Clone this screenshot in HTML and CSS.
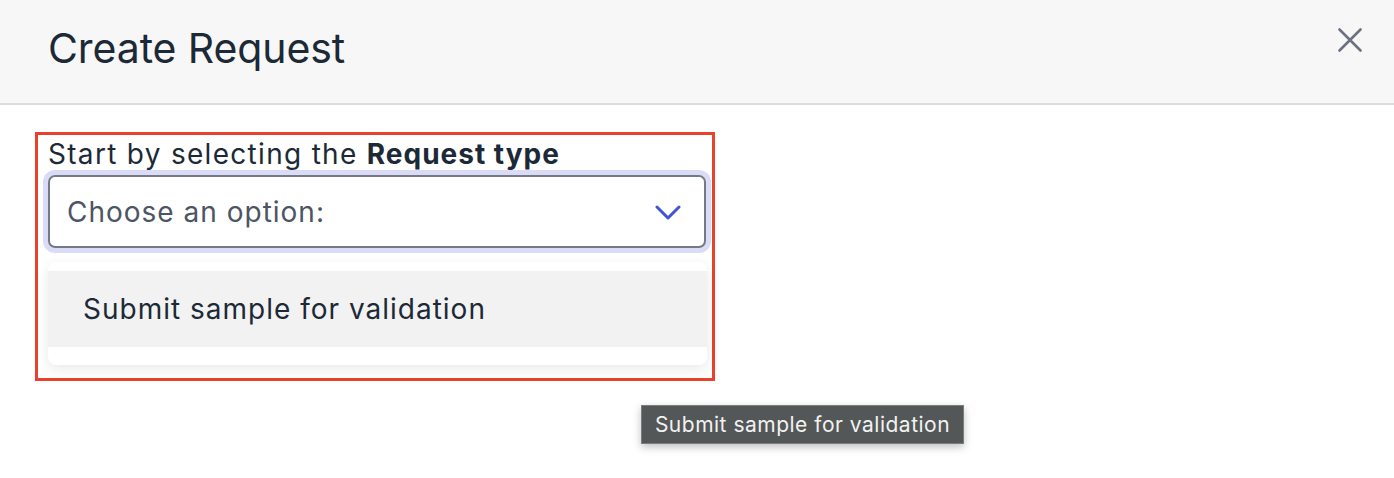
FILE: index.html
```html
<!DOCTYPE html>
<html>
<head>
    <title>Create Request</title>
    <link rel="stylesheet" href="styles.css">
</head>
<body>
    <div class="modal-header">
        <h1 class="modal-title">Create Request</h1>
        <button type="button" class="close-btn" aria-label="Close">
            <svg width="24" height="24" viewBox="0 0 24 24" fill="none" stroke="#6b7280" stroke-width="2.6" stroke-linecap="round">
                <path d="M1.5 1.5L22.5 22.5M22.5 1.5L1.5 22.5"/>
            </svg>
        </button>
    </div>

    <div class="modal-body">
        <div class="highlight-box">
            <label class="field-label" for="request-type">Start by selecting the <b>Request type</b></label>
            <div class="select-box" id="request-type">
                <span class="select-placeholder">Choose an option:</span>
                <svg class="chevron" width="26" height="16" viewBox="0 0 26 16" fill="none" stroke="#4353d8" stroke-width="3" stroke-linecap="round" stroke-linejoin="round">
                    <path d="M2 2L13 13L24 2"/>
                </svg>
            </div>
            <ul class="option-list">
                <li class="option active">Submit sample for validation</li>
            </ul>
        </div>
    </div>

    <div class="tooltip">Submit sample for validation</div>
</body>
</html>
```

FILE: styles.css
```css
body {
    font-family: Inter, "Noto Sans", Arial, sans-serif;
    margin: 0;
    background-color: #ffffff;
    color: #1f2a37;
}

.modal-header {
    height: 103px;
    background-color: #f7f7f7;
    border-bottom: 2px solid #dcdcdf;
    display: flex;
    align-items: center;
    justify-content: space-between;
    padding: 0 32px 0 48px;
}

.modal-title {
    margin: 0;
    font-size: 41px;
    font-weight: 400;
    color: #1c2937;
    letter-spacing: -0.1px;
    padding-bottom: 7px;
}

.close-btn {
    background: none;
    border: none;
    padding: 0;
    display: flex;
    margin-bottom: 23px;
}

.modal-body {
    padding: 27px 0 0 35px;
}

.highlight-box {
    width: 664px;
    height: 243px;
    border: 3px solid #e8412c;
    padding: 0 0 0 10px;
}

.field-label {
    display: block;
    font-size: 28px;
    line-height: 32px;
    letter-spacing: 1.3px;
    margin-top: 3px;
    color: #1c2937;
}

.field-label b {
    font-weight: 700;
    letter-spacing: 1px;
}

.select-box {
    margin-top: 5px;
    width: 658px;
    height: 73px;
    border: 2px solid #737985;
    border-radius: 7px;
    box-shadow: 0 0 0 5px #dadcf7;
    display: flex;
    align-items: center;
    justify-content: space-between;
    padding: 0 23px 0 17px;
    box-sizing: border-box;
}

.select-placeholder {
    font-size: 28px;
    letter-spacing: 1px;
    color: #4b5563;
}

.chevron {
    margin-top: 2px;
}

.option-list {
    list-style: none;
    margin: 14px 0 0 0;
    padding: 9px 0 18px 0;
    width: 659px;
    background-color: #ffffff;
    border-radius: 8px;
    box-shadow: 0 4px 14px rgba(0, 0, 0, 0.09);
}

.option {
    height: 76px;
    display: flex;
    align-items: center;
    padding-left: 35px;
    font-size: 28px;
    letter-spacing: 1px;
    color: #1c2937;
}

.option.active {
    background-color: #f2f2f2;
}

.tooltip {
    position: absolute;
    left: 641px;
    top: 405px;
    width: 323px;
    height: 39px;
    box-sizing: border-box;
    background-color: #545758;
    border: 1px solid #7a7d7e;
    color: #f2f2f2;
    font-size: 21px;
    letter-spacing: 0.5px;
    display: flex;
    align-items: center;
    justify-content: center;
    box-shadow: 0 3px 8px rgba(0, 0, 0, 0.25);
}
```
